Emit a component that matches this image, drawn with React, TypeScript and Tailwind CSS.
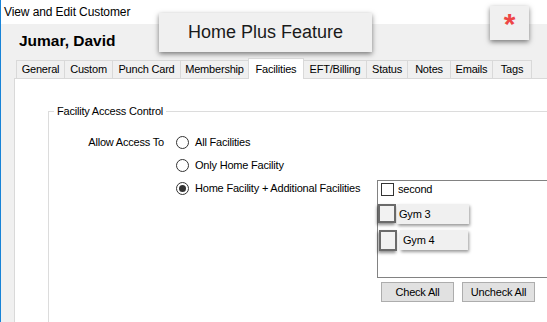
import React from "react";

const tabs: { label: string; w: number; active?: boolean }[] = [
  { label: "General", w: 49 },
  { label: "Custom", w: 49 },
  { label: "Punch Card", w: 69 },
  { label: "Membership", w: 69 },
  { label: "Facilities", w: 56, active: true },
  { label: "EFT/Billing", w: 64 },
  { label: "Status", w: 42 },
  { label: "Notes", w: 44 },
  { label: "Emails", w: 43 },
  { label: "Tags", w: 40 },
];

function Radio({ checked, label }: { checked?: boolean; label: string }) {
  return (
    <div className="flex items-center h-[23px]">
      <span className="w-[13px] h-[13px] rounded-full border border-[#333] bg-white flex items-center justify-center shrink-0">
        {checked && <span className="w-[7px] h-[7px] rounded-full bg-[#333]" />}
      </span>
      <span className="ml-[6px] whitespace-nowrap">{label}</span>
    </div>
  );
}

export default function App() {
  return (
    <div
      className="relative w-[547px] h-[322px] overflow-hidden bg-[#f0f0f0] border-l border-[#1883d7] flex flex-col text-black"
      style={{ fontFamily: '"Liberation Sans", Arial, sans-serif' }}
    >
      {/* title bar */}
      <div className="h-[24px] bg-white flex items-center pl-[3px] text-[12px] tracking-[-0.1px] shrink-0">
        View and Edit Customer
      </div>

      {/* header */}
      <div className="h-[34px] flex items-center pl-[18px] shrink-0">
        <span className="text-[15.5px] font-bold">Jumar, David</span>
      </div>

      {/* tabs */}
      <div className="h-[20px] flex items-end pl-[15px] shrink-0 text-[11px] tracking-[-0.2px]">
        {tabs.map((t, i) =>
          t.active ? (
            <div
              key={t.label}
              style={{ width: t.w }}
              className="relative z-10 -ml-px -mb-px h-[21px] bg-white border-t border-l border-r border-[#d9d9d9] flex items-start justify-center pt-[2px]"
            >
              {t.label}
            </div>
          ) : (
            <div
              key={t.label}
              style={{ width: t.w }}
              className={`${i === 0 ? "" : "-ml-px"} h-[18px] bg-[#f0f0f0] border-t border-l border-r border-[#d9d9d9] flex items-center justify-center`}
            >
              {t.label}
            </div>
          )
        )}
      </div>

      {/* panel */}
      <div className="ml-[13px] flex-1 bg-white border-l border-t border-[#d9d9d9] flex flex-col text-[11px] tracking-[-0.2px]">
        <fieldset className="ml-[33px] mt-[25px] h-[300px] border-l border-t border-[#dcdcdc]">
          <legend className="ml-[5px] px-[3px] leading-[14px]">Facility Access Control</legend>
          <div className="pt-[13px] flex">
            <div className="w-[115px] h-[23px] flex items-center justify-end whitespace-nowrap">
              Allow Access To
            </div>
            <div className="ml-[12px] flex flex-col">
              <Radio label="All Facilities" />
              <Radio label="Only Home Facility" />
              <div className="flex items-start">
                <div className="w-[201px]">
                  <Radio checked label="Home Facility + Additional Facilities" />
                </div>
                <div className="mt-[3px] flex flex-col">
                  <div className="w-[200px] h-[98px] border border-[#828282] bg-white pt-[2px] flex flex-col">
                    <div className="flex items-center pl-[3px] h-[13px]">
                      <span className="w-[13px] h-[13px] border border-[#333] bg-white shrink-0" />
                      <span className="ml-[4px]">second</span>
                    </div>
                    <div className="mt-[8px] flex items-start">
                      <span className="w-[18px] h-[19px] border-2 border-[#6b6b6b] bg-[#f2f2f2] shadow-[-1px_2px_3px_rgba(0,0,0,0.45)] shrink-0" />
                      <span className="ml-px w-[72px] h-[20px] bg-[#f0f0f0] shadow-[1px_2px_3px_rgba(0,0,0,0.4)] flex items-center pl-[2px]">
                        Gym 3
                      </span>
                    </div>
                    <div className="mt-[6px] flex items-start pl-px">
                      <span className="w-[18px] h-[21px] border-2 border-[#6b6b6b] bg-[#f2f2f2] shadow-[-1px_2px_3px_rgba(0,0,0,0.45)] shrink-0" />
                      <span className="ml-[3px] w-[68px] h-[20px] bg-[#f0f0f0] shadow-[1px_2px_3px_rgba(0,0,0,0.4)] flex items-center pl-[3px]">
                        Gym 4
                      </span>
                    </div>
                  </div>
                  <div className="mt-[4px] pl-[4px] flex gap-[8px]">
                    <button className="w-[73px] h-[20px] bg-[#e1e1e1] border border-[#adadad] flex items-center justify-center">
                      Check All
                    </button>
                    <button className="w-[73px] h-[20px] bg-[#e1e1e1] border border-[#adadad] flex items-center justify-center">
                      Uncheck All
                    </button>
                  </div>
                </div>
              </div>
            </div>
          </div>
        </fieldset>
      </div>

      {/* callouts */}
      <div className="absolute left-[158px] top-[13px] w-[213px] h-[39px] bg-[#f0f0f0] shadow-[0_2px_5px_rgba(0,0,0,0.5)] flex items-center justify-center text-[18px] text-[#1a1a1a]">
        Home Plus Feature
      </div>
      <div className="absolute left-[489px] top-[6px] w-[39px] h-[34px] bg-[#f0f0f0] shadow-[0_2px_5px_rgba(0,0,0,0.5)] flex items-start justify-center">
        <span className="text-[30px] leading-[30px] font-bold text-[#ee4646] mt-[3px]">*</span>
      </div>
    </div>
  );
}
